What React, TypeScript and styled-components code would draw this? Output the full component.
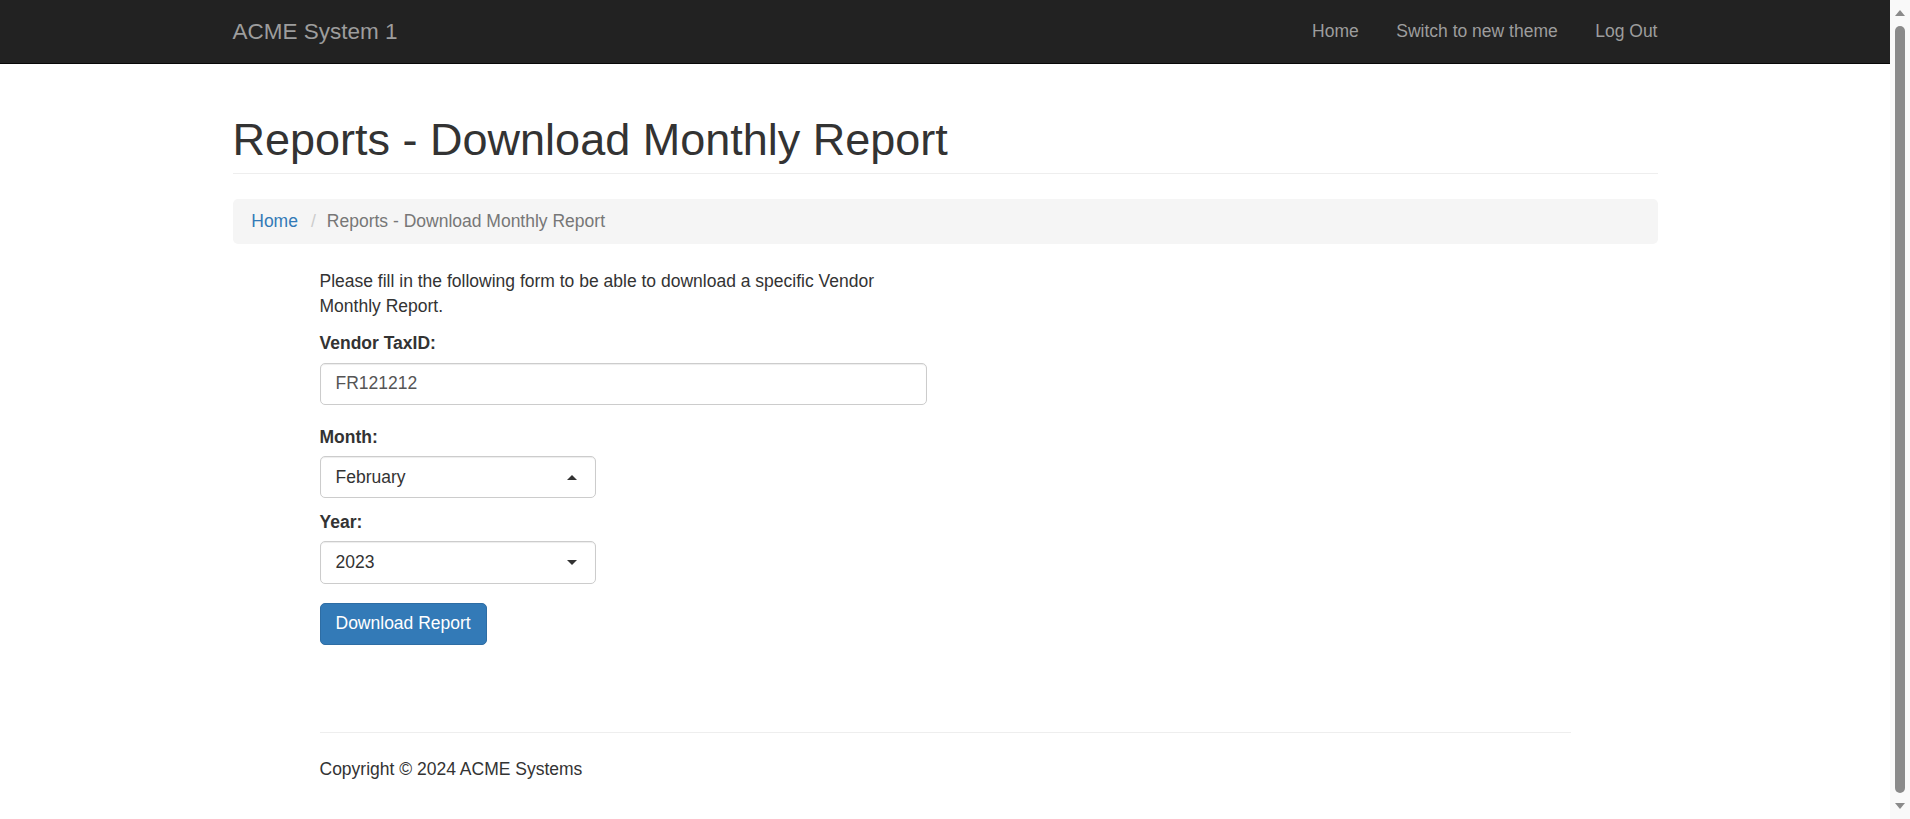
import styled, { createGlobalStyle } from "styled-components";

const GlobalStyle = createGlobalStyle`
  body {
    margin: 0;
    padding-right: 20px;
    font-family: "Liberation Sans", Arial, sans-serif;
    font-size: 17.5px;
    line-height: 25px;
    color: #333;
    background: #fff;
  }
`;

// Top bar
const Navbar = styled.nav`
  height: 62.5px;
  background: #222;
  border-bottom: 1.25px solid #080808;
`;

const Container = styled.div`
  width: 1425px;
  margin: 0 auto;
`;

const NavInner = styled(Container)`
  height: 100%;
  display: flex;
  align-items: center;
  justify-content: space-between;
`;

const Brand = styled.a`
  font-size: 22.5px;
  line-height: 25px;
  color: #9d9d9d;
  text-decoration: none;
`;

const NavLinks = styled.ul`
  display: flex;
  list-style: none;
  margin: 0 -18.75px 0 0;
  padding: 0;
`;

const NavLink = styled.a`
  display: block;
  padding: 0 18.75px;
  color: #9d9d9d;
  text-decoration: none;
`;

// Page heading
const PageHeader = styled.div`
  margin-top: 51px;
  padding-bottom: 8.75px;
  border-bottom: 1.25px solid #eee;
`;

const Title = styled.h1`
  margin: 0;
  font-size: 45px;
  line-height: 49.5px;
  font-weight: 500;
  color: #333;
`;

const Breadcrumb = styled.ol`
  display: flex;
  list-style: none;
  margin: 25px 0 0;
  padding: 10px 18.75px;
  background: #f5f5f5;
  border-radius: 5px;
`;

const Crumb = styled.li<{ $active?: boolean }>`
  color: ${(p) => (p.$active ? "#777" : "#337ab7")};

  li + &::before {
    content: "/";
    padding: 0 11px 0 13px;
    color: #ccc;
  }
`;

// Form column
const Content = styled.div`
  margin-left: 87px;
`;

const Form = styled.form`
  width: 607px;
  margin-top: 25px;
`;

const Intro = styled.p`
  margin: 0 0 12.5px;
`;

const FormGroup = styled.div<{ $gap: number }>`
  margin-bottom: ${(p) => p.$gap}px;
`;

const Label = styled.label`
  display: block;
  font-weight: 700;
  margin-bottom: 6.25px;
`;

const TextInput = styled.input`
  display: block;
  box-sizing: border-box;
  width: 100%;
  height: 42.5px;
  padding: 7.5px 15px;
  font-family: inherit;
  font-size: 17.5px;
  color: #555;
  border: 1.25px solid #ccc;
  border-radius: 5px;
  box-shadow: inset 0 1px 1px rgba(0, 0, 0, 0.075);
  outline: none;
`;

const Select = styled.div`
  box-sizing: border-box;
  width: 276px;
  height: 42.5px;
  padding: 7.5px 15px;
  display: flex;
  align-items: center;
  justify-content: space-between;
  color: #333;
  border: 1.25px solid #ccc;
  border-radius: 5px;
  box-shadow: inset 0 1px 1px rgba(0, 0, 0, 0.075);
`;

const Caret = styled.span<{ $up?: boolean }>`
  width: 0;
  height: 0;
  margin-right: 3px;
  border-left: 5px solid transparent;
  border-right: 5px solid transparent;
  ${(p) => (p.$up ? "border-bottom: 5px solid #333;" : "border-top: 5px solid #333;")}
`;

const Button = styled.button`
  padding: 7.5px 15px;
  font-family: inherit;
  font-size: 17.5px;
  line-height: 25px;
  color: #fff;
  background: #337ab7;
  border: 1.25px solid #2e6da4;
  border-radius: 5px;
  cursor: pointer;
`;

const Footer = styled.footer`
  width: 1251px;
  margin-top: 87px;
  padding-top: 24px;
  padding-bottom: 40px;
  border-top: 1.25px solid #eee;
`;

// Browser-like scrollbar drawn over the right edge
const ScrollBar = styled.div`
  position: fixed;
  top: 0;
  right: 0;
  bottom: 0;
  width: 20px;
  background: #f9f9f9;
  display: flex;
  flex-direction: column;
  align-items: center;
  padding: 10px 0;
  box-sizing: border-box;
  gap: 6px;
`;

const ScrollArrow = styled.span<{ $down?: boolean }>`
  width: 0;
  height: 0;
  border-left: 5px solid transparent;
  border-right: 5px solid transparent;
  ${(p) => (p.$down ? "border-top: 6px solid #8a8a8a;" : "border-bottom: 6px solid #8a8a8a;")}
`;

const ScrollThumb = styled.span`
  flex: 1;
  width: 10px;
  margin: 4px 0;
  background: #8a8a8a;
  border-radius: 5px;
`;

export default function App() {
  return (
    <>
      <GlobalStyle />
      <Navbar>
        <NavInner>
          <Brand href="#">ACME System 1</Brand>
          <NavLinks>
            <li><NavLink href="#">Home</NavLink></li>
            <li><NavLink href="#">Switch to new theme</NavLink></li>
            <li><NavLink href="#">Log Out</NavLink></li>
          </NavLinks>
        </NavInner>
      </Navbar>
      <Container>
        <PageHeader>
          <Title>Reports - Download Monthly Report</Title>
        </PageHeader>
        <Breadcrumb>
          <Crumb>Home</Crumb>
          <Crumb $active>Reports - Download Monthly Report</Crumb>
        </Breadcrumb>
        <Content>
          <Form onSubmit={(e) => e.preventDefault()}>
            <Intro>
              Please fill in the following form to be able to download a specific Vendor Monthly Report.
            </Intro>
            <FormGroup $gap={19.5}>
              <Label>Vendor TaxID:</Label>
              <TextInput defaultValue="FR121212" />
            </FormGroup>
            <FormGroup $gap={11.5}>
              <Label>Month:</Label>
              <Select>
                February <Caret $up />
              </Select>
            </FormGroup>
            <FormGroup $gap={19}>
              <Label>Year:</Label>
              <Select>
                2023 <Caret />
              </Select>
            </FormGroup>
            <Button type="submit">Download Report</Button>
          </Form>
          <Footer>Copyright © 2024 ACME Systems</Footer>
        </Content>
      </Container>
      <ScrollBar>
        <ScrollArrow />
        <ScrollThumb />
        <ScrollArrow $down />
      </ScrollBar>
    </>
  );
}
